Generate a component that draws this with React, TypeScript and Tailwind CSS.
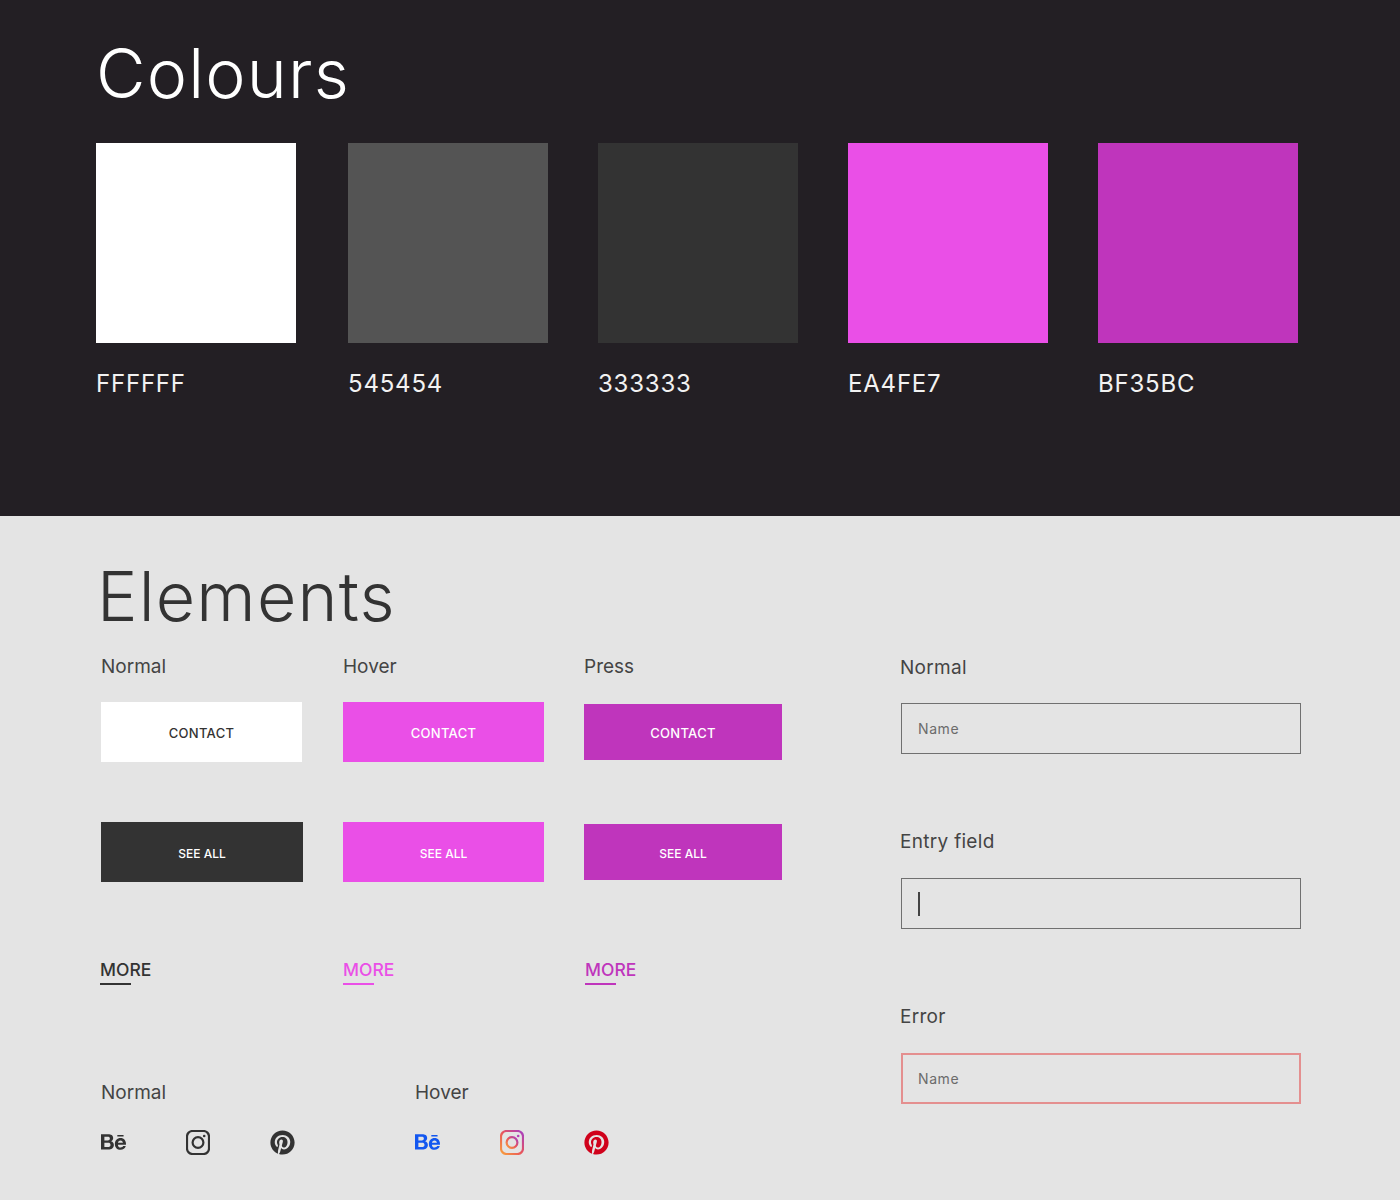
import { FaBehance, FaPinterest } from 'react-icons/fa'

const swatches = [
  { hex: 'FFFFFF', color: 'bg-white' },
  { hex: '545454', color: 'bg-[#545454]' },
  { hex: '333333', color: 'bg-[#333333]' },
  { hex: 'EA4FE7', color: 'bg-[#ea4fe7]' },
  { hex: 'BF35BC', color: 'bg-[#bf35bc]' },
]

function InstagramIcon({ stroke, id }: { stroke?: string; id?: string }) {
  const paint = id ? `url(#${id})` : stroke
  return (
    <svg width="24" height="25" viewBox="0 0 24 25" fill="none">
      {id && (
        <defs>
          <linearGradient id={id} x1="0" y1="1" x2="1" y2="0">
            <stop offset="0" stopColor="#f9a03c" />
            <stop offset="0.5" stopColor="#e8545c" />
            <stop offset="1" stopColor="#a53fc4" />
          </linearGradient>
        </defs>
      )}
      <rect x="1" y="1" width="22" height="23" rx="5.5" stroke={paint} strokeWidth="2.2" />
      <circle cx="12" cy="12.5" r="5.4" stroke={paint} strokeWidth="2.2" />
      <circle cx="18.2" cy="6" r="1.3" fill={id ? '#b53fb8' : stroke} />
    </svg>
  )
}

function Label({ children }: { children: string }) {
  return <p className="text-[19px] leading-[24px] text-[#444444]">{children}</p>
}

function Field({ label, box, children }: { label: string; box: string; children?: React.ReactNode }) {
  return (
    <div>
      <p className="text-[19px] leading-[24px] tracking-[0.3px] text-[#444444]">{label}</p>
      <div className={`ml-[1px] flex h-[51px] w-[400px] items-center ${box}`}>
        {children}
      </div>
    </div>
  )
}

function Placeholder() {
  return <span className="text-[14px] tracking-[0.6px] text-[#6b6b6b]">Name</span>
}

function More({ color, line }: { color: string; line: string }) {
  return (
    <div className="w-fit">
      <p className={`text-[17.5px] font-medium leading-[24px] ${color}`}>MORE</p>
      <div className={`mt-[1px] h-[2px] w-[31px] ${line}`} />
    </div>
  )
}

export default function App() {
  return (
    <div className="min-h-[1200px] w-[1400px] bg-[#e4e4e4] font-['Inter',sans-serif]">
      {/* Colours */}
      <section className="h-[516px] bg-[#231f24] pl-[96px] pt-[32px]">
        <h1 className="text-[68px] font-light leading-[82px] tracking-[1.2px] text-white">Colours</h1>
        <div className="mt-[29px] grid grid-cols-[252px_250px_250px_250px_200px]">
          {swatches.map(s => (
            <div key={s.hex}>
              <div className={`h-[200px] w-[200px] ${s.color}`} />
              <p className="mt-[27px] text-[24px] leading-[28px] tracking-[0.8px] text-[#f2f2f2]">{s.hex}</p>
            </div>
          ))}
        </div>
      </section>

      {/* Elements */}
      <section className="pl-[100px] pt-[39px]">
        <h2 className="-ml-[3px] text-[68px] font-light leading-[82px] tracking-[1.2px] text-[#333333]">Elements</h2>
        <div className="mt-[18px] flex">
          <div className="w-[800px] pl-[1px]">
            <div className="grid grid-cols-[242px_241px_200px] items-center">
              <Label>Normal</Label>
              <Label>Hover</Label>
              <Label>Press</Label>
            </div>

            <div className="mt-[23px] grid h-[60px] grid-cols-[242px_241px_200px] items-center text-[13px] font-medium tracking-[0.3px]">
              <div className="flex h-[60px] w-[201px] items-center justify-center bg-white pt-[3px] text-[#333333]">CONTACT</div>
              <div className="flex h-[60px] w-[201px] items-center justify-center bg-[#ea4fe7] pt-[3px] text-white">CONTACT</div>
              <div className="flex h-[56px] w-[198px] items-center justify-center bg-[#bf35bc] pt-[3px] text-white">CONTACT</div>
            </div>

            <div className="mt-[60px] grid h-[60px] grid-cols-[242px_241px_200px] items-center text-[12px] font-medium">
              <div className="flex h-[60px] w-[202px] items-center justify-center bg-[#333333] pt-[3px] text-white">SEE ALL</div>
              <div className="flex h-[60px] w-[201px] items-center justify-center bg-[#ea4fe7] pt-[3px] text-white">SEE ALL</div>
              <div className="flex h-[56px] w-[198px] items-center justify-center bg-[#bf35bc] pt-[3px] text-white">SEE ALL</div>
            </div>

            <div className="mt-[76px] grid grid-cols-[243px_242px_200px] -ml-[1px]">
              <More color="text-[#333333]" line="bg-[#333333]" />
              <More color="text-[#ea4fe7]" line="bg-[#ea4fe7]" />
              <More color="text-[#bf35bc]" line="bg-[#bf35bc]" />
            </div>

            <div className="mt-[96px] grid grid-cols-[314px_300px]">
              <div>
                <Label>Normal</Label>
                <div className="mt-[24px] flex h-[26px] items-center text-[#333333]">
                  <FaBehance className="h-[26px] w-[25px]" />
                  <div className="ml-[60px]"><InstagramIcon stroke="#333333" /></div>
                  <div className="ml-[60px]"><FaPinterest className="h-[25px] w-[25px]" /></div>
                </div>
              </div>
              <div>
                <Label>Hover</Label>
                <div className="mt-[24px] flex h-[26px] items-center">
                  <FaBehance className="h-[26px] w-[25px] text-[#1357f0]" />
                  <div className="ml-[60px]"><InstagramIcon id="igHover" /></div>
                  <div className="ml-[60px]"><FaPinterest className="h-[25px] w-[25px] text-[#d0021b]" /></div>
                </div>
              </div>
            </div>
          </div>

          <div className="flex flex-col gap-[76px] pt-[1px]">
            <Field label="Normal" box="mt-[23px] border border-[#707070] pl-[16px]"><Placeholder /></Field>
            <Field label="Entry field" box="mt-[24px] border border-[#707070] pl-[16px]">
              <div className="h-[24px] w-[2px] bg-[#444444]" />
            </Field>
            <Field label="Error" box="mt-[24px] border-2 border-[#e48f8f] pl-[15px]"><Placeholder /></Field>
          </div>
        </div>
      </section>
    </div>
  )
}
